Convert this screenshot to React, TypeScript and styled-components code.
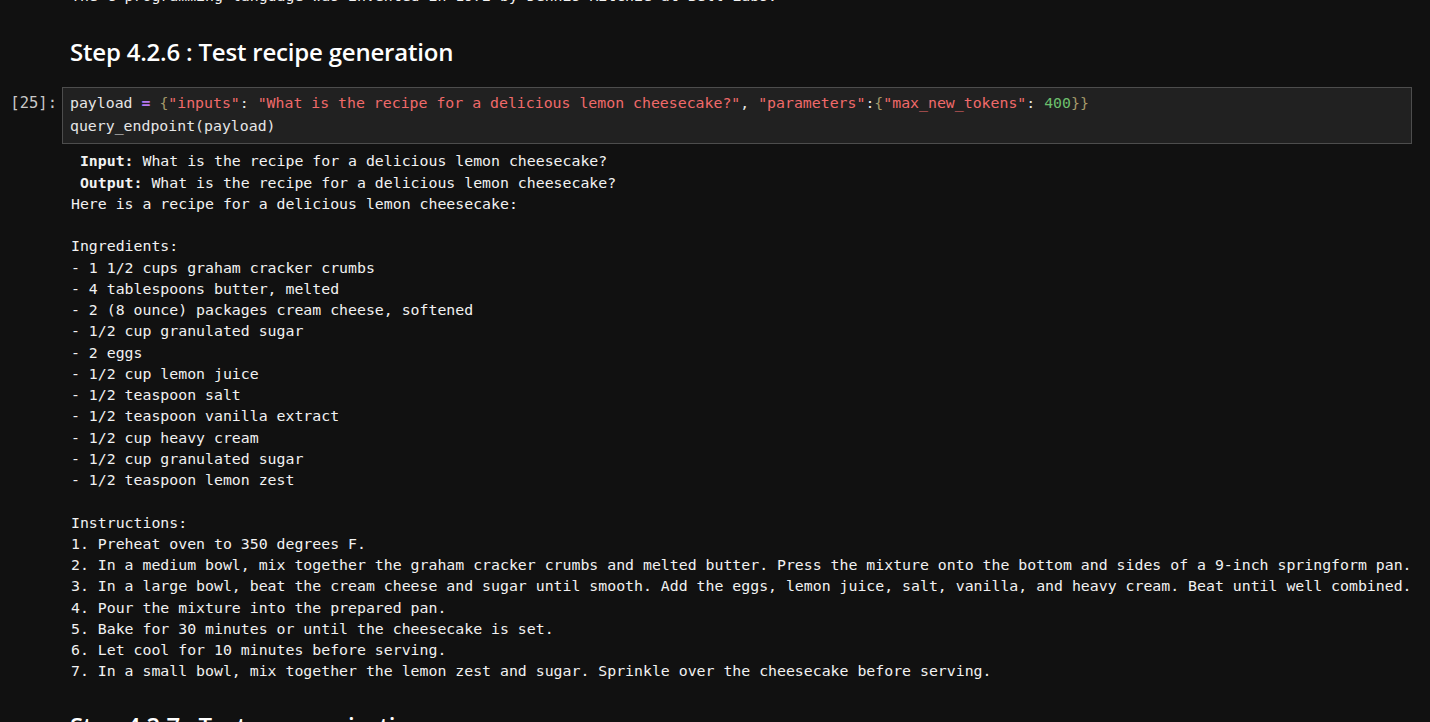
import React from "react";
import styled, { createGlobalStyle } from "styled-components";

const Global = createGlobalStyle`
  html, body { margin: 0; padding: 0; background: #111111; }
  body { overflow: hidden; }
`;

const MONO = `"DejaVu Sans Mono", "Liberation Mono", monospace`;

const Page = styled.div`
  width: 1430px;
  height: 722px;
  overflow: hidden;
  background: #111111;
  color: #e6e6e6;
`;

const Cell = styled.div<{ $top?: number }>`
  display: grid;
  grid-template-columns: 62px 1350px;
  margin-top: ${(p) => p.$top ?? 0}px;
`;

const Prompt = styled.div`
  font-family: ${MONO};
  font-size: 15.5px;
  line-height: 23px;
  color: #c8c8c8;
  text-align: right;
  padding-right: 5px;
  padding-top: 5px;
`;

const OutputPre = styled.pre<{ $top?: number }>`
  margin: 0;
  margin-top: ${(p) => p.$top ?? 0}px;
  padding-left: 9px;
  font-family: ${MONO};
  font-size: 14.85px;
  line-height: 21.25px;
  color: #f2f2f2;
  white-space: pre;
  strong { font-weight: bold; }
`;

const Heading = styled.h2<{ $top: number }>`
  margin: ${(p) => p.$top}px 0 0 0;
  padding-left: 8px;
  font-family: "Open Sans", "Noto Sans", sans-serif;
  font-weight: 600;
  font-size: 24px;
  line-height: 34px;
  color: #ffffff;
  letter-spacing: -0.2px;
`;

const CodeBox = styled.div`
  background: #212121;
  border: 1px solid #4d4d4d;
  padding: 4px 7px 5px;
  font-family: ${MONO};
  font-size: 14.85px;
  line-height: 23px;
  color: #e6e6e6;
  white-space: pre;
`;

const Tok = styled.span<{ $k: "op" | "br" | "str" | "num" }>`
  color: ${(p) =>
    p.$k === "op"
      ? "#b778f0"
      : p.$k === "br"
      ? "#a59a6a"
      : p.$k === "str"
      ? "#f06a6a"
      : "#6cbf6c"};
  font-weight: ${(p) => (p.$k === "op" ? "bold" : "normal")};
`;

const Spacer = styled.div``;

const recipe = `Here is a recipe for a delicious lemon cheesecake:

Ingredients:
- 1 1/2 cups graham cracker crumbs
- 4 tablespoons butter, melted
- 2 (8 ounce) packages cream cheese, softened
- 1/2 cup granulated sugar
- 2 eggs
- 1/2 cup lemon juice
- 1/2 teaspoon salt
- 1/2 teaspoon vanilla extract
- 1/2 cup heavy cream
- 1/2 cup granulated sugar
- 1/2 teaspoon lemon zest

Instructions:
1. Preheat oven to 350 degrees F.
2. In a medium bowl, mix together the graham cracker crumbs and melted butter. Press the mixture onto the bottom and sides of a 9-inch springform pan.
3. In a large bowl, beat the cream cheese and sugar until smooth. Add the eggs, lemon juice, salt, vanilla, and heavy cream. Beat until well combined.
4. Pour the mixture into the prepared pan.
5. Bake for 30 minutes or until the cheesecake is set.
6. Let cool for 10 minutes before serving.
7. In a small bowl, mix together the lemon zest and sugar. Sprinkle over the cheesecake before serving.`;

export default function App() {
  return (
    <Page>
      <Global />
      <Cell>
        <Spacer />
        <OutputPre $top={-14}>The C programming language was invented in 1972 by Dennis Ritchie at Bell Labs.</OutputPre>
      </Cell>
      <Cell>
        <Spacer />
        <Heading $top={28}>Step 4.2.6 : Test recipe generation</Heading>
      </Cell>
      <Cell $top={18}>
        <Prompt>[25]:</Prompt>
        <CodeBox>
          {"payload "}
          <Tok $k="op">=</Tok> <Tok $k="br">{"{"}</Tok>
          <Tok $k="str">"inputs"</Tok>: <Tok $k="str">"What is the recipe for a delicious lemon cheesecake?"</Tok>,{" "}
          <Tok $k="str">"parameters"</Tok>:<Tok $k="br">{"{"}</Tok>
          <Tok $k="str">"max_new_tokens"</Tok>: <Tok $k="num">400</Tok>
          <Tok $k="br">{"}}"}</Tok>
          {"\nquery_endpoint(payload)"}
        </CodeBox>
      </Cell>
      <Cell>
        <Spacer />
        <OutputPre $top={7}>
          {" "}
          <strong>Input:</strong>
          {" What is the recipe for a delicious lemon cheesecake?\n "}
          <strong>Output:</strong>
          {" What is the recipe for a delicious lemon cheesecake?\n"}
          {recipe}
        </OutputPre>
      </Cell>
      <Cell>
        <Spacer />
        <Heading $top={26}>Step 4.2.7 : Test summarization</Heading>
      </Cell>
    </Page>
  );
}
